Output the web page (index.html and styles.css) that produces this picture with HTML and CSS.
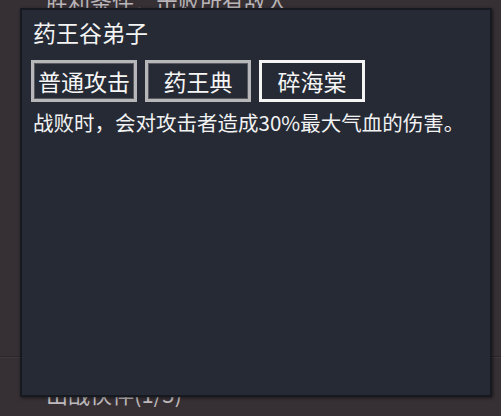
FILE: index.html
```html
<!DOCTYPE html>
<html lang="zh-CN">
<head>
    <meta charset="UTF-8">
    <title>药王谷弟子</title>
    <link rel="stylesheet" href="styles.css">
</head>
<body>

    <div class="scene">
        <div class="goal">胜利条件：击败所有敌人</div>
        <div class="divider"></div>
        <div class="team">出战伙伴(1/5)</div>

        <div class="popup">
            <h2 class="popup-title">药王谷弟子</h2>
            <div class="skills">
                <button class="skill">普通攻击</button>
                <button class="skill">药王典</button>
                <button class="skill active">碎海棠</button>
            </div>
            <p class="skill-desc">战败时，会对攻击者造成30%最大气血的伤害。</p>
        </div>
    </div>

</body>
</html>
```

FILE: styles.css
```css
* {
    margin: 0;
    padding: 0;
    box-sizing: border-box;
}

body {
    font-family: "Noto Sans CJK SC", "Noto Sans", sans-serif;
    background: #363034;
    width: 501px;
    height: 416px;
    overflow: hidden;
}

.scene {
    display: flow-root;
    position: relative;
    height: 416px;
}

.goal {
    padding: 0 0 0 46px;
    margin-top: -13px;
    font-size: 22px;
    line-height: 26px;
    color: #b9b5b8;
}

.divider {
    margin-top: 343px;
    height: 2px;
    border-top: 1px solid #2a2628;
    border-bottom: 1px solid #3f393d;
}

.team {
    padding-left: 46px;
    margin-top: 22px;
    font-size: 22px;
    line-height: 26px;
    color: #bdb9bc;
}

.popup {
    position: absolute;
    left: 20px;
    top: 8px;
    width: 472px;
    height: 389px;
    background: #252a35;
    border: 2px solid #161920;
    box-shadow: 1px 1px 3px rgba(0, 0, 0, 0.5);
    padding: 7px 9px;
}

.popup-title {
    font-size: 23px;
    font-weight: normal;
    line-height: 30px;
    color: #f4f4f4;
    padding-left: 2px;
}

.skills {
    display: flex;
    gap: 8px;
    margin-top: 13px;
}

.skill {
    font-family: inherit;
    font-size: 23px;
    line-height: 34px;
    color: #f6f6f6;
    background: #252a35;
    border: 3px solid #b7b7b9;
    box-shadow: inset 0 0 0 1px #585b62;
    width: 106px;
    height: 42px;
    text-align: center;
}

.skill.active {
    border-color: #f4f4f4;
    box-shadow: none;
}

.skill-desc {
    margin-top: 6px;
    padding-left: 2px;
    font-size: 20.5px;
    line-height: 28px;
    color: #f2f2f2;
}
```
